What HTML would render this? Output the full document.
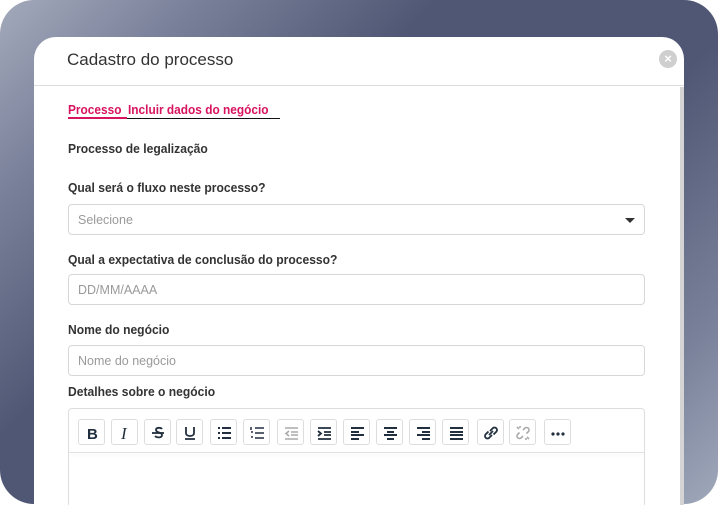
<!DOCTYPE html>
<html><head><meta charset="utf-8"><style>
*{margin:0;padding:0;box-sizing:border-box}
html,body{width:719px;height:505px;overflow:hidden}
body{background:#fff;position:relative;font-family:"Liberation Sans",sans-serif}
.bg{position:absolute;left:0;top:0;width:718px;height:504px;border-radius:34px;background:linear-gradient(135deg,#a3aabb 0%,#7c839c 15%,#4f5774 36%,#4f5774 62%,#7a829b 85%,#a0a8bb 100%)}
.modal{position:absolute;left:34px;top:37px;width:650px;height:468px;background:#fff;border-radius:22px 22px 0 0;overflow:hidden}
.title{position:absolute;left:33px;top:13px;font-size:17px;color:#333}
.close{position:absolute;left:625px;top:13px;width:18px;height:18px;border-radius:50%;background:#cfcfcf;color:#fff;font-size:13px;font-weight:bold;text-align:center;line-height:18px}
.hline{position:absolute;left:0;top:48px;width:650px;height:1px;background:#ddd}
.sb{position:absolute;left:646px;top:50px;width:4px;height:460px;background:#d4d4d4}
.tab{position:absolute;top:66px;font-size:12.5px;font-weight:bold;color:#d8135f;transform:scaleX(.95);transform-origin:left}
.ul1{position:absolute;left:34px;top:80px;width:59px;height:2px;background:#d8135f}
.ul2{position:absolute;left:93px;top:81px;width:153px;height:1px;background:#111}
.lab{position:absolute;left:34px;font-size:13px;font-weight:bold;color:#333;transform:scaleX(.93);transform-origin:left;white-space:nowrap}
.inp{position:absolute;left:34px;width:577px;height:31px;border:1px solid #d7d7d7;border-radius:4px;font-size:12.5px;color:#9a9a9a;padding:8px 9px;line-height:14px}
.caret{position:absolute;right:9px;top:13px;border-left:5px solid transparent;border-right:5px solid transparent;border-top:5px solid #333}
.ed{position:absolute;left:34px;top:371px;width:577px;height:140px;border:1px solid #ddd;border-radius:4px}
.tb{position:absolute;left:0;top:43px;width:575px;height:1px;background:#e2e2e2;box-shadow:0 2px 4px rgba(0,0,0,.08)}
.b{position:absolute;top:10px;width:27px;height:26px;border:1px solid #ddd;border-radius:3px;background:#fff}
.b svg{position:absolute;left:4px;top:4px}
</style></head><body>
<div class="bg"></div>
<div class="modal">
<div class="title">Cadastro do processo</div>
<div class="close">×</div>
<div class="hline"></div>
<div class="sb"></div>
<div class="tab" style="left:34px">Processo</div>
<div class="tab" style="left:94px">Incluir dados do negócio</div>
<div class="ul1"></div><div class="ul2"></div>
<div class="lab" style="top:104px">Processo de legalização</div>
<div class="lab" style="top:143px">Qual será o fluxo neste processo?</div>
<div class="inp" style="top:167px">Selecione<div class="caret"></div></div>
<div class="lab" style="top:215px">Qual a expectativa de conclusão do processo?</div>
<div class="inp" style="top:237px">DD/MM/AAAA</div>
<div class="lab" style="top:285px">Nome do negócio</div>
<div class="inp" style="top:308px">Nome do negócio</div>
<div class="lab" style="top:347px">Detalhes sobre o negócio</div>
<div class="ed">
<div class="tb"></div>
<div class="b" style="left:9px"><svg width="18" height="18"><text x="4" y="15" font-family="Liberation Sans" font-weight="bold" font-size="15" fill="#222f3e">B</text></svg></div>
<div class="b" style="left:42px"><svg width="18" height="18"><text x="5" y="15" font-family="Liberation Serif" font-style="italic" font-size="17" fill="#222f3e">I</text></svg></div>
<div class="b" style="left:75px"><svg width="18" height="18" fill="none" stroke="#222f3e" stroke-width="1.8"><path d="M13 5c-1-1.5-6-2-6 1s6 2 6 5-5 3-7 1"/><path d="M3 9h12"/></svg></div>
<div class="b" style="left:107px"><svg width="18" height="18" fill="none" stroke="#222f3e" stroke-width="1.8"><path d="M5 3v6c0 4 8 4 8 0V3M4 15h10"/></svg></div>
<div class="b" style="left:141px"><svg width="18" height="18" stroke="#222f3e" stroke-width="2"><path d="M3 4h2M3 9h2M3 14h2M7 4h9M7 9h9M7 14h9"/></svg></div>
<div class="b" style="left:174px"><svg width="18" height="18" stroke="#222f3e" stroke-width="2"><path d="M3 3v3M3 8h2M3 13h2M7 4h9M7 9h9M7 14h9" stroke-width="1.5"/></svg></div>
<div class="b" style="left:208px"><svg width="18" height="18" stroke="#aaa" stroke-width="1.6" fill="none"><path d="M3 4h13M9 8h7M9 11h7M3 15h13M7 7l-3 2.5 3 2.5"/></svg></div>
<div class="b" style="left:241px"><svg width="18" height="18" stroke="#222f3e" stroke-width="1.8" fill="none"><path d="M3 4h13M9 8h7M9 11h7M3 15h13M3 7l3 2.5-3 2.5"/></svg></div>
<div class="b" style="left:274px"><svg width="18" height="18" stroke="#222f3e" stroke-width="2"><path d="M3 4h13M3 8h8M3 11h13M3 15h8"/></svg></div>
<div class="b" style="left:307px"><svg width="18" height="18" stroke="#222f3e" stroke-width="2"><path d="M3 4h13M6 8h7M3 11h13M6 15h7"/></svg></div>
<div class="b" style="left:340px"><svg width="18" height="18" stroke="#222f3e" stroke-width="2"><path d="M3 4h13M8 8h8M3 11h13M8 15h8"/></svg></div>
<div class="b" style="left:373px"><svg width="18" height="18" stroke="#222f3e" stroke-width="2"><path d="M3 4h13M3 8h13M3 11h13M3 15h13"/></svg></div>
<div class="b" style="left:408px"><svg width="18" height="18" stroke="#222f3e" stroke-width="1.8" fill="none"><path d="M8 7l3-3a2.5 2.5 0 0 1 3.5 3.5l-3 3M10 11l-3 3a2.5 2.5 0 0 1-3.5-3.5l3-3M7 11l4-4"/></svg></div>
<div class="b" style="left:440px"><svg width="18" height="18" stroke="#aaa" stroke-width="1.6" fill="none"><path d="M9 6l2-2a2.5 2.5 0 0 1 3.5 3.5l-2 2M9 12l-2 2a2.5 2.5 0 0 1-3.5-3.5l2-2M3 3l2 2M15 15l-2-2M6 2v2M12 16v-2"/></svg></div>
<div class="b" style="left:475px"><svg width="18" height="18" fill="#222f3e"><circle cx="4" cy="10" r="1.6"/><circle cx="9" cy="10" r="1.6"/><circle cx="14" cy="10" r="1.6"/></svg></div>
</div>
</div>
</body></html>
